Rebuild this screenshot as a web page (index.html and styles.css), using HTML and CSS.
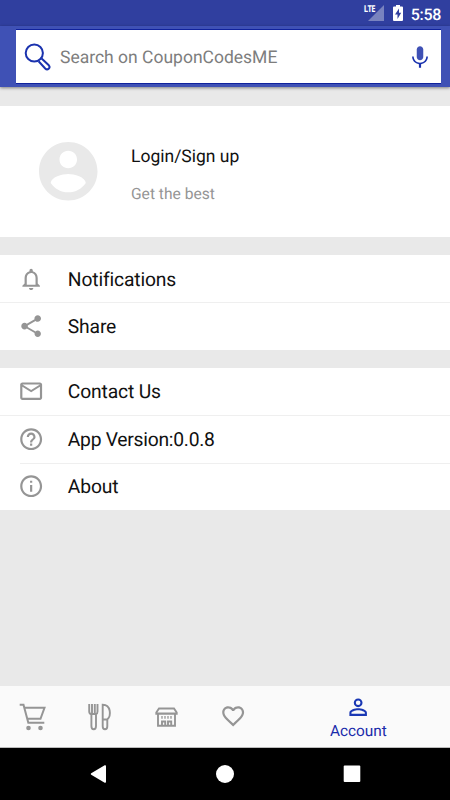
FILE: index.html
```html
<!DOCTYPE html>
<html lang="en">
<head>
<meta charset="utf-8">
<title>Account</title>
<link rel="stylesheet" href="styles.css">
</head>
<body>
<div class="screen">
  <div class="status">
    <div class="network"><span class="lte">LTE</span><svg class="signal" viewBox="0 0 16 16"><path d="M16 0v16H0z"/></svg></div>
    <svg class="battery" viewBox="0 0 10 16"><path fill="#fff" d="M3 0h4v1.500h2q1 0 1 1V15q0 1-1 1H1q-1 0-1-1V2.500q0-1 1-1h2z"/><path fill="#303f9f" d="M6 3.500 2 9.500h2.500V14l3.700-6.200H6z"/></svg>
    <span class="time">5:58</span>
  </div>
  <header class="appbar">
    <div class="search">
      <svg class="glass" viewBox="0 0 28 28"><circle cx="11.300" cy="10" r="8.600"/><path d="m15.600 18.300 6.600 7.200c2.400 2.300 5.700-.8 3.600-3.200l-7.200-6.800"/></svg>
      <span class="hint">Search on CouponCodesME</span>
      <svg class="mic" viewBox="0 0 24 24"><path fill="#3f51b5" d="M12 15c1.660 0 3-1.340 3-3V5c0-1.660-1.340-3-3-3S9 3.340 9 5v7c0 1.660 1.340 3 3 3z"/><path fill="#1a32ae" d="M17.800 11.500c0 3.200-2.600 5.700-5.800 5.700s-5.800-2.500-5.800-5.700H4.700c0 3.800 2.700 6.600 6.300 7.100V22h2v-3.400c3.600-.5 6.300-3.300 6.300-7.100z"/></svg>
    </div>
  </header>
  <main class="content">
    <section class="profile">
      <svg class="avatar" viewBox="2 2 20 20"><path d="M12 2C6.480 2 2 6.480 2 12s4.480 10 10 10 10-4.480 10-10S17.520 2 12 2zm0 3c1.660 0 3 1.340 3 3s-1.340 3-3 3-3-1.340-3-3 1.340-3 3-3zm0 14.200c-2.500 0-4.710-1.280-6-3.220.03-1.990 4-3.080 6-3.080 1.990 0 5.970 1.090 6 3.080-1.290 1.940-3.500 3.220-6 3.220z"/></svg>
      <div class="who"><div class="login">Login/Sign up</div><div class="sub">Get the best</div></div>
    </section>
    <section class="list">
      <div class="row"><svg class="icon" viewBox="0 0 24 24"><path d="M12 22c1.100 0 2-.9 2-2h-4c0 1.100.9 2 2 2zm6-6v-5c0-3.070-1.630-5.640-4.500-6.320V4c0-.83-.67-1.500-1.500-1.500s-1.500.67-1.500 1.500v.68C7.640 5.360 6 7.920 6 11v5l-2 2v1h16v-1l-2-2zm-2 1H8v-6c0-2.480 1.510-4.500 4-4.500s4 2.020 4 4.500v6z"/></svg><span class="label">Notifications</span></div>
      <div class="row"><svg class="icon" viewBox="0 0 24 24"><path d="M18 16.080c-.76 0-1.440.3-1.960.77L8.910 12.700c.05-.23.09-.46.09-.7s-.04-.47-.09-.7l7.050-4.110c.54.5 1.250.81 2.040.81 1.660 0 3-1.340 3-3s-1.340-3-3-3-3 1.340-3 3c0 .24.04.47.09.7L8.040 9.810C7.500 9.310 6.790 9 6 9c-1.660 0-3 1.340-3 3s1.340 3 3 3c.79 0 1.500-.31 2.040-.81l7.120 4.160c-.05.21-.08.43-.08.65 0 1.610 1.310 2.920 2.920 2.920s2.920-1.310 2.920-2.920-1.310-2.920-2.920-2.920z"/></svg><span class="label">Share</span></div>
    </section>
    <section class="list">
      <div class="row"><svg class="icon" viewBox="0 0 24 24"><path d="M22 6c0-1.100-.9-2-2-2H4c-1.100 0-2 .9-2 2v12c0 1.100.9 2 2 2h16c1.100 0 2-.9 2-2V6zm-2 0-8 5-8-5h16zm0 12H4V8l8 5 8-5v10z"/></svg><span class="label">Contact Us</span></div>
      <div class="row"><svg class="icon" viewBox="0 0 24 24"><path d="M11 18h2v-2h-2v2zm1-16C6.480 2 2 6.480 2 12s4.480 10 10 10 10-4.480 10-10S17.520 2 12 2zm0 18c-4.410 0-8-3.590-8-8s3.590-8 8-8 8 3.590 8 8-3.590 8-8 8zm0-14c-2.210 0-4 1.790-4 4h2c0-1.100.9-2 2-2s2 .9 2 2c0 2-3 1.750-3 5h2c0-2.250 3-2.500 3-5 0-2.210-1.790-4-4-4z"/></svg><span class="label version">App Version:0.0.8</span></div>
      <div class="row inset"><svg class="icon" viewBox="0 0 24 24"><path d="M11 17h2v-6h-2v6zm1-15C6.480 2 2 6.480 2 12s4.480 10 10 10 10-4.480 10-10S17.520 2 12 2zm0 18c-4.410 0-8-3.590-8-8s3.590-8 8-8 8 3.590 8 8-3.590 8-8 8zM11 9h2V7h-2v2z"/></svg><span class="label">About</span></div>
    </section>
  </main>
  <nav class="tabs">
    <div class="tab"><svg class="line" viewBox="0 0 28 28"><path d="M.7 1.800h3.800l4.800 18h16M5.300 4.800h20.200l-4 11H8.300"/><circle class="dot" cx="9.500" cy="25" r="2.300"/><circle class="dot" cx="21.500" cy="25" r="2.300"/></svg></div>
    <div class="tab"><svg class="line cutlery" viewBox="0 0 28 28"><path d="M3.200 1v7.500q0 2.200 2.200 2.700V23q0 3.300 2.300 3.300T10 23V11.200q1.500-.5 1.500-2.700V1M6 1v9.200M8.800 1v9.200M5.400 11H10M16.700 1.700v21.600q0 3 2.300 3t2.300-3V16.500c4-3.500 3.900-14.800-4.600-14.800zM16.700 16.500h4.600"/></svg></div>
    <div class="tab"><svg class="line store" viewBox="0 0 28 28"><path d="M6 5.500h15l2.700 4v1.300H3.300V9.500zM5 11v11.700h17V11M3 10.400h21M9 22v-3.500h3.200V22M15 22v-3.500h3.200V22"/><path class="windows" d="M9 13v2.800M12 13v2.800M15 13v2.800M18 13v2.800"/></svg></div>
    <div class="tab"><svg class="icon" viewBox="0 0 24 24"><path d="M16.500 3c-1.740 0-3.410.81-4.500 2.090C10.910 3.810 9.240 3 7.500 3 4.420 3 2 5.420 2 8.500c0 3.780 3.400 6.860 8.550 11.540L12 21.350l1.450-1.320C18.600 15.360 22 12.280 22 8.500 22 5.420 19.580 3 16.500 3zm-4.400 15.550-.1.100-.1-.1C7.140 14.240 4 11.390 4 8.500 4 6.500 5.500 5 7.500 5c1.540 0 3.040.99 3.570 2.360h1.870C13.460 5.990 14.960 5 16.500 5c2 0 3.500 1.500 3.500 3.500 0 2.890-3.140 5.740-7.900 10.050z"/></svg></div>
    <div class="tab active"><svg class="icon" viewBox="0 0 24 24"><path d="M12 5.900a2.100 2.100 0 1 1 0 4.200 2.100 2.100 0 0 1 0-4.200m0 9c2.970 0 6.100 1.460 6.100 2.100v1.100H5.900V17c0-.64 3.130-2.100 6.100-2.100M12 4C9.790 4 8 5.790 8 8s1.790 4 4 4 4-1.790 4-4-1.790-4-4-4zm0 9c-2.670 0-8 1.340-8 4v3h16v-3c0-2.660-5.330-4-8-4z"/></svg><span>Account</span></div>
  </nav>
  <div class="system">
    <svg viewBox="0 0 20 20"><path d="M2.200 9.300 15.700 1.300q1.300-.6 1.300.9v15.600q0 1.500-1.300.9L2.200 10.700q-1-.7 0-1.400z"/></svg>
    <svg viewBox="0 0 20 20"><circle cx="10" cy="10" r="9"/></svg>
    <svg viewBox="0 0 20 20"><rect x="1.700" y="1.500" width="16.600" height="16.600" rx="1"/></svg>
  </div>
</div>
</body>
</html>
```

FILE: styles.css
```css
* { box-sizing: border-box; }
body { margin: 0; font-family: Roboto, sans-serif; text-rendering: geometricPrecision; }
svg { display: block; flex: none; }
.screen { width: 450px; height: 800px; display: flex; flex-direction: column; background: #e9e9e9; overflow: hidden; }

.status { height: 26px; flex: none; background: #303f9f; color: #fff; display: flex; justify-content: flex-end; align-items: flex-start; padding: 5px 9px 0 0; }
.network { display: flex; align-items: flex-start; margin-right: 9px; }
.lte { font: 700 9.5px/8px "Open Sans", sans-serif; letter-spacing: -.8px; transform: scaleX(.8); transform-origin: right; margin-right: -7px; }
.signal { width: 16px; height: 16px; fill: #7983bf; }
.battery { width: 10px; height: 16px; margin-right: 8px; }
.time { font-size: 16px; font-weight: 500; line-height: 19px; letter-spacing: -.3px; }

.appbar { height: 61px; flex: none; background: #3f51b5; padding: 3px 9px 3px 16px; box-shadow: 0 1px 3px rgba(0,0,0,.45); z-index: 1; }
.search { height: 55px; background: #fff; border: 1px solid #10229c; border-width: 1px 0; display: flex; align-items: center; padding: 0 7px; }
.glass { width: 28px; height: 28px; fill: none; stroke: #1a32ae; stroke-width: 2; }
.hint { flex: 1; margin-left: 9px; padding-top: 2px; font-size: 17.5px; color: #7d7d7d; }
.mic { width: 26px; height: 26px; margin-right: 1px; }

.content { flex: 1; display: flex; flex-direction: column; gap: 18px; padding-top: 19px; }
.profile { height: 131px; background: #fff; display: flex; align-items: center; padding-left: 39px; }
.avatar { width: 58.5px; height: 58.5px; fill: #e9e9e9; }
.who { margin-left: 33.5px; display: flex; flex-direction: column; gap: 17px; padding-top: 7px; }
.login { font-size: 17.5px; line-height: 20px; color: #111; }
.sub { font-size: 15.6px; line-height: 20px; color: #959595; }
.list { background: #fff; }
.row { height: 47.4px; display: flex; align-items: center; gap: 23.9px; padding-left: 17.6px; font-size: 19.3px; color: #111; }
.row + .row { background: linear-gradient(#efefef, #efefef) 0 0 / 100% 1px no-repeat; }
.row.inset { background-position: 20px 0; }
.label { padding-top: 1px; letter-spacing: -.15px; }
.version { letter-spacing: -.26px; }
.icon { width: 26.3px; height: 26.3px; fill: #959595; }

.tabs { height: 62px; flex: none; background: #fafafa; border-bottom: 1px solid #bbb; display: grid; grid-template-columns: repeat(4, 66.7px) 1fr; align-items: center; justify-items: center; }
.line { width: 28px; height: 28px; fill: none; stroke: #959595; stroke-width: 2; }
.line.cutlery, .line.store { stroke-width: 1.9; }
.line .dot { fill: #959595; stroke: none; }
.line .windows { stroke-width: 1.3; }
.active { display: flex; flex-direction: column; align-items: center; padding-top: 3px; color: #1a2cab; font-size: 15.4px; line-height: 21px; }
.active .icon { fill: #1a38b4; }

.system { height: 52px; flex: none; background: #000; display: flex; justify-content: center; align-items: center; gap: 106.500px; }
.system svg { width: 20px; height: 20px; fill: #fff; }
```
